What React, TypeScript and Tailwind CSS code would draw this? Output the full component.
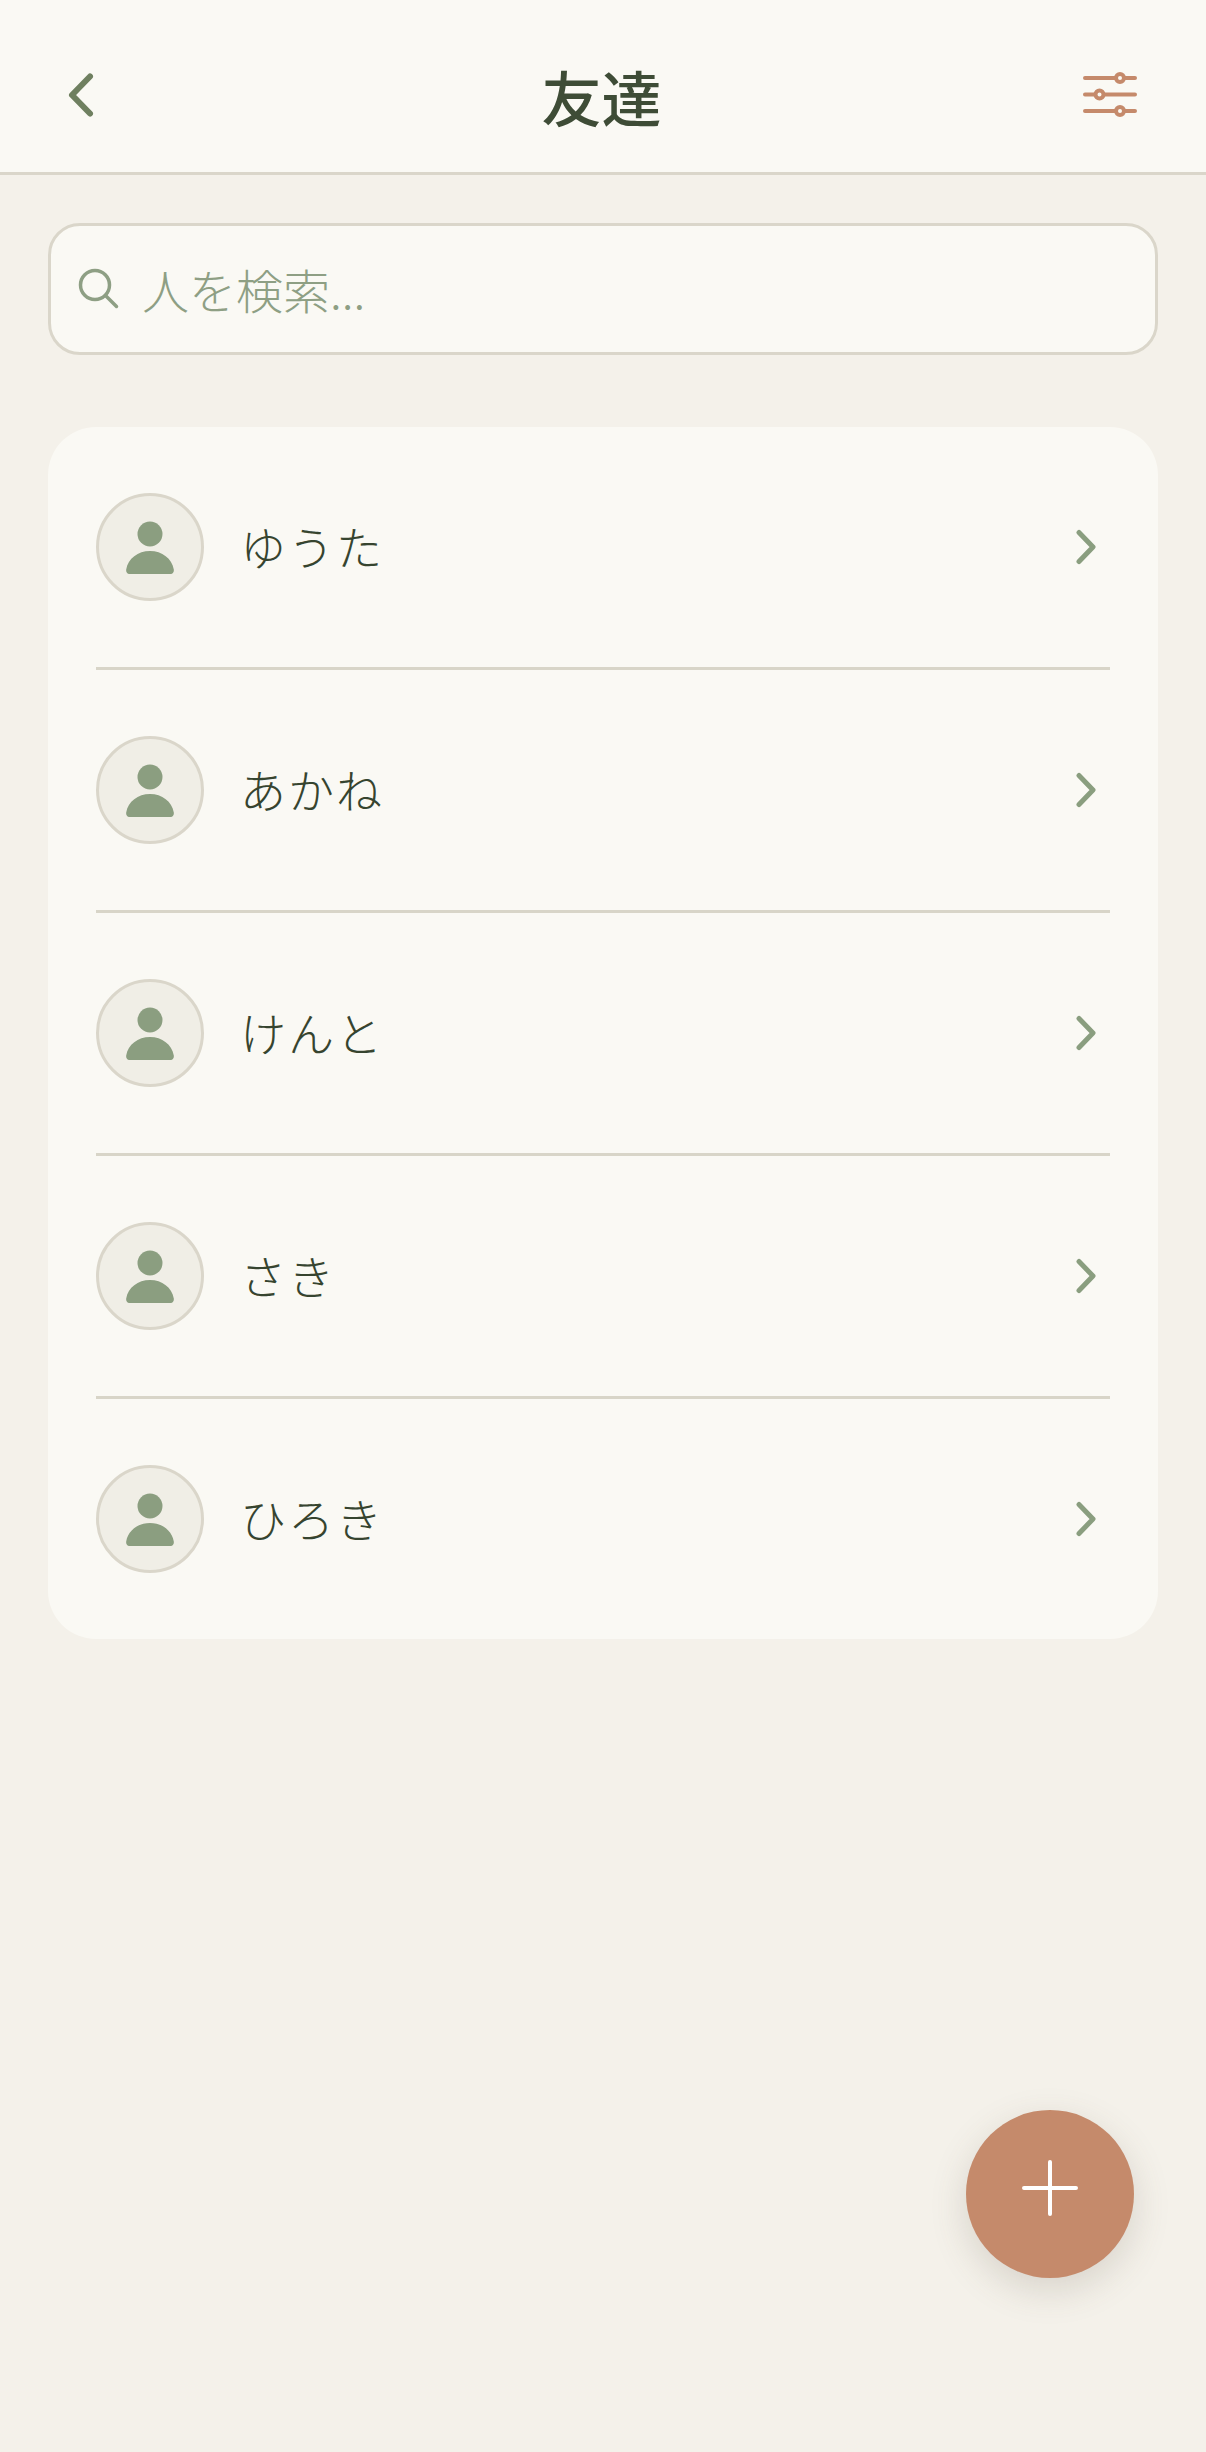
const friends = ['ゆうた', 'あかね', 'けんと', 'さき', 'ひろき']

const font = 'font-["Noto_Sans_CJK_JP","Noto_Sans",sans-serif]'

function PersonIcon() {
  return (
    <svg width="48" height="54" viewBox="0 0 48 54" fill="#8B9E80" className="mt-[2px]">
      <circle cx="24" cy="13" r="12.5" />
      <path d="M0.2 48.5C2 37.5 12 30 24 30s22 7.5 23.8 18.5c.4 2.3-.9 4.5-3 4.5H3.2c-2.1 0-3.4-2.2-3-4.5z" />
    </svg>
  )
}

function FilterIcon() {
  return (
    <svg width="54" height="46" viewBox="0 0 54 46" fill="none" stroke="#C58A6B" strokeWidth="4" strokeLinecap="round">
      <path d="M2 6h50M2 22.500h50M2 39h50" />
      <circle cx="37" cy="6" r="4" fill="#FAF9F4" />
      <circle cx="16.500" cy="22.500" r="4" fill="#FAF9F4" />
      <circle cx="37" cy="39" r="4" fill="#FAF9F4" />
    </svg>
  )
}

export default function App() {
  return (
    <div className={`relative flex flex-col h-[2452px] bg-[#F4F1EA] ${font}`}>
      <header className="flex items-center h-[175px] pl-[66px] pr-[69px] pt-[18px] bg-[#FAF9F4] border-b-[3px] border-[#DAD6CA]">
        <div className="flex-1 flex">
          <button>
            <svg width="30" height="48" viewBox="0 0 30 48" fill="none" stroke="#6F8060" strokeWidth="6" strokeLinecap="round" strokeLinejoin="round">
              <path d="M24 5.500 6 24l18 18.500" />
            </svg>
          </button>
        </div>
        <h1 className="text-[60px] leading-none font-medium text-[#3E4C36] mt-[2px]">友達</h1>
        <div className="flex-1 flex justify-end">
          <button>
            <FilterIcon />
          </button>
        </div>
      </header>

      <div className="px-[48px] pt-[48px] flex flex-col gap-[72px]">
        <div className="flex items-center h-[132px] pl-[27px] pr-[24px] gap-[22px] rounded-[32px] bg-[#FAF9F4] border-[3px] border-[#DAD6CA]">
          <svg width="42" height="42" viewBox="0 0 42 42" fill="none" stroke="#8E9F84" strokeWidth="3.500" strokeLinecap="round" className="shrink-0">
            <circle cx="17" cy="17" r="14.500" />
            <path d="m27.500 27.500 11 11" />
          </svg>
          <input
            placeholder="人を検索..."
            className="flex-1 min-w-0 bg-transparent outline-none text-[47px] font-light text-[#3E4C36] placeholder:text-[#8E9F84]"
          />
        </div>

        <ul className="flex flex-col rounded-[48px] bg-[#FAF9F4] px-[48px]">
          {friends.map((name, i) => (
            <li
              key={name}
              className={`flex items-center h-[240px] ${i > 0 ? 'box-content border-t-[3px] border-[#D8D5C8]' : ''}`}
            >
              <div className="flex items-center justify-center w-[108px] h-[108px] rounded-full bg-[#F0EEE6] border-[3px] border-[#DAD6CA] shrink-0">
                <PersonIcon />
              </div>
              <span className="ml-[36px] mb-[3px] flex-1 text-[46px] tracking-[2px] font-light text-[#36442F]">{name}</span>
              <svg width="24" height="36" viewBox="0 0 24 36" fill="none" stroke="#8A9E7F" strokeWidth="5" strokeLinecap="round" strokeLinejoin="round" className="mr-[12px]">
                <path d="M5 3.500 19 18 5 32.500" />
              </svg>
            </li>
          ))}
        </ul>
      </div>

      <button className="absolute left-[966px] top-[2110px] flex justify-center w-[168px] h-[168px] pt-[50px] rounded-full bg-[#C58A6B] shadow-[0_12px_36px_rgba(90,80,60,0.18)]">
        <svg width="56" height="56" viewBox="0 0 56 56" fill="none" stroke="#fff" strokeWidth="4" strokeLinecap="round">
          <path d="M28 2v52M2 28h52" />
        </svg>
      </button>
    </div>
  )
}
